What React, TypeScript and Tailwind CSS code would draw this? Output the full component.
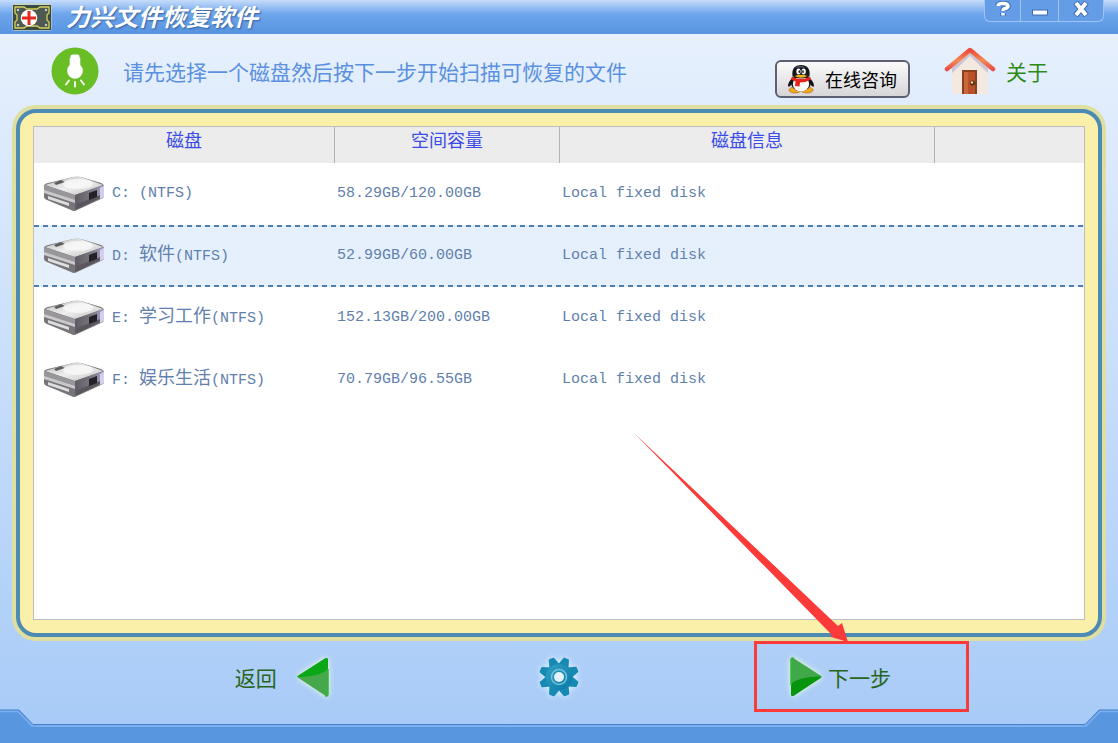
import React, { useState } from 'react';

const disks = [
  { letter: 'C', label: '(NTFS)', space: '58.29GB/120.00GB', info: 'Local fixed disk' },
  { letter: 'D', label: '软件(NTFS)', space: '52.99GB/60.00GB', info: 'Local fixed disk' },
  { letter: 'E', label: '学习工作(NTFS)', space: '152.13GB/200.00GB', info: 'Local fixed disk' },
  { letter: 'F', label: '娱乐生活(NTFS)', space: '70.79GB/96.55GB', info: 'Local fixed disk' },
];

// latin runs are 15px mono, chinese runs are 18px
const DiskLabel = ({ text }: { text: string }) => {
  const parts = text.split('(');
  return (
    <>
      {parts[0] && <span className="text-lg/5">{parts[0]}</span>}
      ({parts[1]}
    </>
  );
};

const LogoIcon = () => (
  <svg width="40" height="29" viewBox="0 0 40 29" aria-hidden="true">
    <rect x="0" y="1" width="40" height="28" rx="3" fill="#cbd9b0" opacity=".6" />
    <rect x="1" y="3" width="38" height="25" fill="#3b4a42" />
    <path d="M3 5h9l3 2h10l3-2h9v6l-2 2v5l2 2v6h-9l-3-2H15l-3 2H3v-6l2-2v-5l-2-2z" fill="#4d5951" stroke="#d9cf5c" strokeWidth="1.3" />
    <circle cx="6" cy="8" r="1.200" fill="#c9d0c0" />
    <circle cx="34" cy="8" r="1.200" fill="#c9d0c0" />
    <circle cx="6" cy="23" r="1.200" fill="#c9d0c0" />
    <circle cx="34" cy="23" r="1.200" fill="#c9d0c0" />
    <circle cx="17" cy="16" r="8.3" fill="#fff" />
    <path d="M15.500 9h3v5.500H24v3h-5.500V23h-3v-5.500H10v-3h5.500z" fill="#e6281e" />
  </svg>
);

const BulbIcon = () => (
  <svg width="48" height="48" viewBox="0 0 48 48" aria-hidden="true">
    <circle cx="24" cy="24" r="23.500" fill="#69bd25" />
    <path d="M19.500 9.500q0-2 2-2h5q2 0 2 2V11h.8v7q2.500 2 2.500 6a7.800 7.800 0 0 1-15.600 0q0-4 2.500-6v-7h.8z" fill="#fff" />
    <path d="M18 33.500l-3 4M24 35v4.500M30 33.500l3 4" stroke="#fff" strokeWidth="1.800" strokeLinecap="round" />
  </svg>
);

const PenguinIcon = () => (
  <svg width="28" height="30" viewBox="0 0 28 30" aria-hidden="true">
    <ellipse cx="8" cy="26" rx="6" ry="3" fill="#f5a81c" stroke="#a85d08" strokeWidth=".6" />
    <ellipse cx="20" cy="26" rx="6" ry="3" fill="#f5a81c" stroke="#a85d08" strokeWidth=".6" />
    <path d="M6 13Q1 18 1 22q1 2 4-2zM22 13q5 5 5 9-1 2-4-2z" fill="#151515" />
    <ellipse cx="14" cy="18.500" rx="10" ry="9" fill="#151515" />
    <ellipse cx="14" cy="20" rx="8.200" ry="7.500" fill="#fff" />
    <path d="M5.500 12C4.500 4.500 8 1 14 1s9.500 3.500 8.500 11q-8.500 5-17 0z" fill="#15151c" />
    <path d="M8 4q5-4 11 0-5-1.500-11 0z" fill="#59688c" />
    <ellipse cx="11.500" cy="7.500" rx="2.100" ry="3" fill="#fff" />
    <ellipse cx="16.700" cy="7.500" rx="2.100" ry="3" fill="#fff" />
    <ellipse cx="12.300" cy="7.700" rx=".8" ry="1.400" fill="#111" />
    <ellipse cx="16" cy="7.700" rx=".8" ry="1.400" fill="#111" />
    <path d="M7.500 12q6.500-2.500 13 0-6.500 3.500-13 0z" fill="#f7b31c" />
    <path d="M5 12.500q9 5 18 0l1 3q-5 3-11 3l-.5 4-4.500-.5.5-4.500-4.500-2z" fill="#e5241b" />
  </svg>
);

const HouseIcon = () => (
  <svg width="52" height="50" viewBox="0 0 52 50" aria-hidden="true">
    <defs>
      <linearGradient id="roof" x1="0" x2="0" y1="0" y2="1">
        <stop offset="0" stopColor="#ed4b37" />
        <stop offset=".55" stopColor="#f58a52" />
        <stop offset="1" stopColor="#e8504a" />
      </linearGradient>
    </defs>
    <path d="M8 22L26 7l18 15v26H8z" fill="#f4e9e0" />
    <path d="M8 27L26 10l18 17v-5L26 5 8 22z" fill="#cbc5d5" />
    <path d="M3 23L26 4l23 19" fill="none" stroke="url(#roof)" strokeWidth="4.500" strokeLinecap="round" strokeLinejoin="round" />
    <path d="M18 24h15v24H18z" fill="#8d3f22" />
    <path d="M20 26h11v22H20z" fill="#b95028" />
    <path d="M20 26h4v22h-4z" fill="#c9673a" />
    <circle cx="28.500" cy="37" r="2.500" fill="#55291c" />
    <circle cx="28" cy="36.500" r="1.200" fill="#f5dc85" />
  </svg>
);

const DriveIcon = () => (
  <svg className="shrink-0" width="62" height="36" viewBox="0 0 62 36" aria-hidden="true">
    <defs>
      <linearGradient id="drive-top" x1="0" x2="1" y1="0" y2="1">
        <stop offset="0" stopColor="#b9b9b9" />
        <stop offset=".5" stopColor="#efefef" />
        <stop offset="1" stopColor="#bdbdbd" />
      </linearGradient>
      <linearGradient id="drive-side" x1="0" x2="1">
        <stop offset="0" stopColor="#5e5b62" />
        <stop offset=".6" stopColor="#7d7984" />
        <stop offset="1" stopColor="#aaa2cc" />
      </linearGradient>
    </defs>
    <path d="M0 10Q0 8 4 7L25 2q6-2 12-1l20 6q3 1 3 4v9q0 2-3 3L33 34q-3 2-6 0L3 24q-3-1-3-3z" fill="#77757a" />
    <path d="M1 9L25 2q6-2 12-1l22 8-28 10z" fill="url(#drive-top)" />
    <path d="M0 9l31 10v6L0 15z" fill="#98969a" />
    <path d="M0 14l31 10v3L0 17z" fill="#c9c9c9" />
    <path d="M1 18l30 10v6L2 23z" fill="#77757a" />
    <path d="M4 20l21 7v3L4 23z" fill="#dedede" />
    <path d="M31 19L60 9v12L31 34z" fill="url(#drive-side)" />
    <path d="M33 28l26-10v3L33 33z" fill="#5a565e" />
    <path d="M45 17l8-3v7l-8 3z" fill="#242128" />
    <path d="M56 12l4-2v11l-4 2z" fill="#d3cfee" />
    <path d="M10 7l7-3 4 2-9 3z" fill="#5e5e5e" />
    <ellipse cx="34" cy="8" rx="15" ry="5" fill="#fafafa" opacity=".75" />
  </svg>
);

const GearIcon = () => (
  <svg className="overflow-visible drop-shadow-[0_0_3px_#e3f4ff]" width="40" height="42" viewBox="-20 -21 40 42" aria-hidden="true">
    <defs>
      <linearGradient id="gear" x1="0" x2="1" y1="0" y2="1">
        <stop offset="0" stopColor="#35a0c6" />
        <stop offset="1" stopColor="#0879a5" />
      </linearGradient>
    </defs>
    <g fill="#168ab3" stroke="#168ab3" strokeWidth="2" strokeLinejoin="round">
      {[22, 67, 112, 157, 202, 247, 292, 337].map((deg) => (
        <path key={deg} d="M-5-10L-2-19H2L5-10z" transform={`rotate(${deg})`} />
      ))}
    </g>
    <circle r="13" fill="url(#gear)" />
    <circle r="7.500" fill="none" stroke="#6fc4dc" strokeWidth="1.500" />
    <circle r="5" fill="#e3f2fb" />
  </svg>
);

const BackArrow = () => (
  <svg className="overflow-visible drop-shadow-[0_0_3px_#f0ffd8]" width="32" height="40" viewBox="0 0 32 40" aria-hidden="true">
    <path d="M1.500 18.500L28 1.500q3-1.500 3 1.500v34q0 3-3 1.500L1.500 21q-2-1 0-2.500z" fill="#47a84b" />
    <path d="M1.500 18.500L28 1.500q3-1.500 3 1.500v9Q22 20 0 20z" fill="#0aa816" />
    <path d="M31 12v25q0 3-3 1.500" fill="none" stroke="#34b53a" strokeWidth="1.500" />
  </svg>
);

const NextArrow = () => (
  <svg className="overflow-visible drop-shadow-[0_0_3px_#f0ffd8]" width="32" height="40" viewBox="0 0 32 40" aria-hidden="true">
    <path d="M30.500 18.500L4 1.500Q1 0 1 3v34q0 3 3 1.500L30.500 21q2-1 0-2.500z" fill="#40a848" />
    <path d="M1 27q9-8 30.500-7.500l-1 1.500L4 38.500Q1 40 1 37z" fill="#07950d" />
    <path d="M1 28V3Q1 0 4 1.500" fill="none" stroke="#34b53a" strokeWidth="1.500" />
  </svg>
);

export default function App() {
  const [selected, setSelected] = useState('D');

  return (
    <div className="flex min-h-screen flex-col bg-linear-to-b from-[#eaf2fd] to-[#a6caf7] font-['Noto_Sans_CJK_SC',sans-serif]">
      <header className="flex h-[34px] items-start justify-between bg-linear-to-b from-[#c6dcfa] via-[#6ea6ec] via-40% to-[#5793df] pr-3.5 pl-3">
        <div className="flex items-center gap-3.5">
          <LogoIcon />
          <h1 className="text-2xl/8 font-bold text-white italic [text-shadow:1px_1px_2px_#315f9f]">力兴文件恢复软件</h1>
        </div>
        <div className="flex h-[22px] divide-x divide-[#9cc4f7] rounded-b-md border border-t-0 border-[#9cc4f7] bg-[#649de5]">
          <button type="button" aria-label="帮助" className="flex w-9 items-center justify-center pb-1">
            <svg width="18" height="16" viewBox="0 0 18 16" aria-hidden="true">
              <path d="M4 5q0-2.500 5-2.500t5 2.500q0 2-3 2.500-2 .5-2 2.500M9 12v3" fill="none" stroke="#3c6eb4" strokeWidth="5.500" />
              <path d="M4 5q0-2.500 5-2.500t5 2.500q0 2-3 2.500-2 .5-2 2.500M9 12v2.500" fill="none" stroke="#fff" strokeWidth="3.500" />
            </svg>
          </button>
          <button type="button" aria-label="最小化" className="flex w-[38px] items-center justify-center pb-1">
            <svg width="18" height="16" viewBox="0 0 18 16" aria-hidden="true">
              <path d="M1 8.500h16v6H1z" fill="#3c6eb4" />
              <path d="M2 9.500h14v4H2z" fill="#fff" />
            </svg>
          </button>
          <button type="button" aria-label="关闭" className="flex w-[44px] items-center justify-center pb-1">
            <svg width="18" height="16" viewBox="0 0 18 16" aria-hidden="true">
              <path d="M3.500 1.500l11 13M14.500 1.500l-11 13" stroke="#3c6eb4" strokeWidth="6" />
              <path d="M4 2l10 12M14 2L4 14" stroke="#fff" strokeWidth="4" />
            </svg>
          </button>
        </div>
      </header>

      <div className="flex h-[71px] items-center justify-between pt-0.5 pr-[70px] pl-[51px]">
        <div className="flex items-center gap-6">
          <BulbIcon />
          <p className="text-[21px]/8 text-[#5a90e0]">请先选择一个磁盘然后按下一步开始扫描可恢复的文件</p>
        </div>
        <div className="flex items-center gap-[34px]">
          <button type="button" className="mt-4 flex h-[38px] w-[135px] items-center gap-2.5 rounded-md border-2 border-[#5c6070] bg-linear-to-b from-[#fbfbfb] to-[#d6d6d9] pl-2.5 text-lg/6 text-black">
            <PenguinIcon />
            在线咨询
          </button>
          <button type="button" className="flex items-center gap-2.5 text-[21px]/8 text-[#2c8a12]">
            <HouseIcon />
            关于
          </button>
        </div>
      </div>

      <main className="mx-3 flex flex-1 flex-col rounded-3xl bg-[#dfe0a0] p-1">
        <div className="flex flex-1 flex-col rounded-[20px] border-4 border-[#4d8bb5] bg-[#fbf0a9] p-[13px]">
          <div className="flex-1 border border-[#bdbdc0] bg-white">
            <table className="w-full table-fixed border-separate border-spacing-0 text-left">
              <colgroup>
                <col className="w-[301px]" />
                <col className="w-[225px]" />
                <col className="w-[375px]" />
                <col />
              </colgroup>
              <thead>
                <tr className="h-9 bg-[#ececec] text-center text-lg/6 text-[#3a4be8]">
                  <th className="border-r border-[#b4b4b6] pb-3 font-normal">磁盘</th>
                  <th className="border-r border-[#b4b4b6] pb-3 font-normal">空间容量</th>
                  <th className="border-r border-[#b4b4b6] pb-3 font-normal">磁盘信息</th>
                  <td />
                </tr>
              </thead>
              <tbody className="font-['Liberation_Mono','Noto_Sans_CJK_SC',monospace] text-[15px]/5 text-[#5f80ad]">
                {disks.map((disk) => (
                  <tr
                    key={disk.letter}
                    onClick={() => setSelected(disk.letter)}
                    className={`h-[62px] ${
                      selected === disk.letter
                        ? '[background:repeating-linear-gradient(90deg,#4f7fae_0_5px,transparent_5px_9px)_top/100%_2px_no-repeat,repeating-linear-gradient(90deg,#4f7fae_0_5px,transparent_5px_9px)_bottom/100%_2px_no-repeat,#e6f0fc]'
                        : ''
                    }`}
                  >
                    <td className="p-0 pl-2.5">
                      <div className="flex items-center gap-1.5">
                        <DriveIcon />
                        <span className="whitespace-pre">
                          {disk.letter}: <DiskLabel text={disk.label} />
                        </span>
                      </div>
                    </td>
                    <td className="p-0 pl-0.5">{disk.space}</td>
                    <td className="p-0 pl-0.5">{disk.info}</td>
                    <td />
                  </tr>
                ))}
              </tbody>
            </table>
          </div>
        </div>
      </main>

      <footer>
        <div className="grid h-[68px] grid-cols-3 items-center text-[21px]/8 text-[#28651c]">
          <button type="button" className="flex items-center gap-5 justify-self-end pr-11">
            返回
            <BackArrow />
          </button>
          <button type="button" aria-label="设置" className="justify-self-center">
            <GearIcon />
          </button>
          <div className="relative mr-[149px] justify-self-end">
            <button type="button" className="flex h-[71px] w-[215px] items-center gap-1.5 border-3 border-[#fb3a3a] pl-[33px]">
              <NextArrow />
              下一步
            </button>
            <svg className="pointer-events-none absolute right-[121px] bottom-[70px]" width="214" height="209" viewBox="0 0 214 209" aria-hidden="true">
              <path d="M0 0L204 193 208 190 214 209 197 204 197 201z" fill="#fb3a3a" />
            </svg>
          </div>
        </div>
        <div className="flex h-[34px] items-stretch">
          <svg width="36" height="34" viewBox="0 0 36 34" aria-hidden="true">
            <path d="M0 1h19l14 15h3v18H0z" fill="#5996e0" />
            <path d="M0 1h19l14 14.500h3" fill="none" stroke="#4680cc" />
            <path d="M0 2.500h18l14 14.500h4" fill="none" stroke="#7eb0ef" strokeWidth="1.500" />
          </svg>
          <div className="mt-[15px] flex-1 border-t border-[#4680cc] bg-[#5996e0]">
            <div className="h-0.5 bg-[#7eb0ef]" />
          </div>
          <svg width="36" height="34" viewBox="0 0 36 34" aria-hidden="true">
            <path d="M36 1H17L3 16H0v18h36z" fill="#5996e0" />
            <path d="M36 1H17L3 15.500H0" fill="none" stroke="#4680cc" />
            <path d="M36 2.500H18L4 17H0" fill="none" stroke="#7eb0ef" strokeWidth="1.500" />
          </svg>
        </div>
      </footer>
    </div>
  );
}
